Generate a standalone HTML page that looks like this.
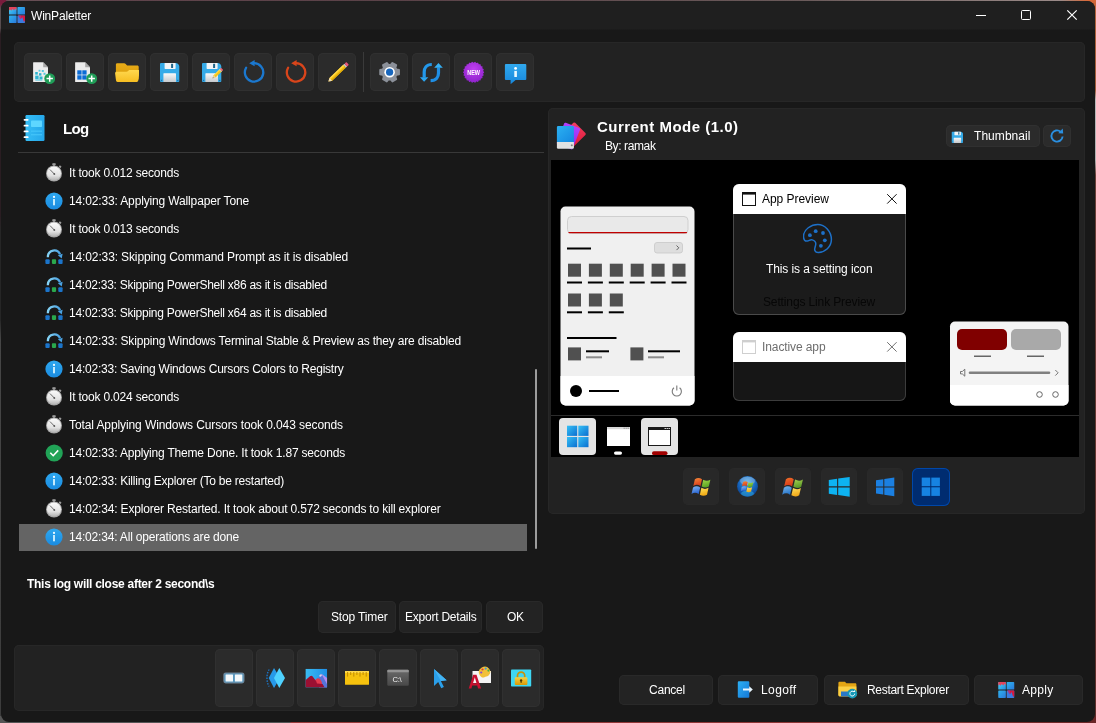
<!DOCTYPE html><html><head><meta charset="utf-8"><title>WinPaletter</title><style>
html,body{margin:0;padding:0}
body{width:1096px;height:723px;position:relative;overflow:hidden;background:#5a5050;font-family:"Liberation Sans", sans-serif;}
.b{position:absolute;display:block}
.t{position:absolute;white-space:pre;line-height:1;font-family:"Liberation Sans", sans-serif;will-change:transform}
#bg{position:absolute;left:0;top:0;width:1096px;height:723px;background:linear-gradient(90deg,#555 0,#555 290px,#9a3b3b 291px,#8a3434 900px,#6a2626 100%)}
#bgt{position:absolute;left:0;top:0;width:1096px;height:12px;background:linear-gradient(90deg,#7a1c3c 0,#6a5258 9px,#60444c 100px,#5a4248 400px,#6a5a5a 800px,#9a8a88 1060px,#d86838 1088px)}
#bgl{position:absolute;left:0;top:0;width:6px;height:716px;background:linear-gradient(180deg,#7a1c3c 0,#7a1c3c 4px,#5a5052 9px,#564c4e 28px,#2a1d22 34px,#2a1d22 215px,#262626 230px,#262626 320px,#464646 340px,#3c3c3c 100%)}
#bgr{position:absolute;left:1090px;top:0;width:6px;height:716px;background:linear-gradient(180deg,#d86838 0,#b0623c 12px,#a05c3a 90px,#b8b8b8 100px,#b0b0b0 160px,#6a4038 175px,#5e2e2a 100%)}
</style></head><body><div id="bg"></div><div id="bgt"></div><div id="bgl"></div><div id="bgr"></div>
<div class="b" id="win" style="left:1px;top:1px;width:1094px;height:721px;background:#181818;border-radius:8px;overflow:hidden">
<div class="b" style="left:0;top:0;width:1094px;height:30px;background:linear-gradient(180deg,#1f1f1f 0,#1f1f1f 27.500px,#181818 29.500px)"></div></div>
<svg class="b" style="left:9px;top:7px" width="16" height="16" viewBox="0 0 16 16">
<defs><linearGradient id="apA" x1="0" y1="0" x2="1" y2="1"><stop offset="0" stop-color="#4ad8f5"/><stop offset="1" stop-color="#2388e2"/></linearGradient>
<linearGradient id="apB" x1="0" y1="0" x2="1" y2="1"><stop offset="0" stop-color="#2fb4ee"/><stop offset="1" stop-color="#2a78dc"/></linearGradient></defs>
<rect x="0" y="0" width="7.600" height="7.600" rx=".7" fill="url(#apA)"/>
<rect x="8.400" y="0" width="7.600" height="7.600" rx=".7" fill="url(#apB)"/>
<rect x="0" y="8.400" width="7.600" height="7.600" rx=".7" fill="url(#apB)"/>
<rect x="8.400" y="8.400" width="7.600" height="7.600" rx=".7" fill="#3a7ce0"/>
<path d="M.7 0h6.200a.7.700 0 0 1 .7.700V3.400L6.300 1.800 5 3.600 3.600 1.900 2.200 3.800 1.200 2.600 0 3.600V.7A.7.700 0 0 1 .7 0z" fill="#e2455c"/>
<path d="M9.400 8.400h5.900a.7.700 0 0 1 .7.700v4.300l-1 1.600-1.800-5-1.400 2.200z" fill="#d81840"/>
<path d="M9 8.400h2.800l.2 3.800-1.300-1z" fill="#a83a90" opacity=".8"/>
</svg>
<span class="t" id="t0" style="left:30.5px;top:9.84px;font-size:12px;font-weight:400;color:#fff;letter-spacing:-0.185px;">WinPaletter</span>
<svg class="b" style="left:970px;top:0" width="126" height="31" viewBox="0 0 126 31"><g stroke="#fff" stroke-width="1" fill="none"><path d="M6 15.500h10"/><rect x="51.500" y="10.500" width="9" height="9" rx="1"/><path d="M97.300 10.300l9.400 9.400M106.700 10.300l-9.400 9.400" stroke-width="1.200"/></g></svg>
<div class="b" style="left:14px;top:42px;width:1070.5px;height:60px;background:#222222;border-radius:5px;box-shadow:inset 0 0 0 1px #272727"></div>
<div class="b" style="left:24px;top:53px;width:38px;height:38px;background:#2b2b2b;border-radius:5px;box-shadow:inset 0 0 0 1px #303030"></div>
<svg class="b" style="left:31px;top:60px" width="24" height="24" viewBox="0 0 24 24"><path d="M2.600 2.300h9.600l4.800 4.900v14.400a.5.500 0 0 1-.5.500H2.600a.5.500 0 0 1-.5-.5V2.800a.5.500 0 0 1 .5-.5z" fill="#ececec"/>
<path d="M12.200 2.300l4.800 4.900h-4.300a.5.500 0 0 1-.5-.5z" fill="#a8a8a8"/>
<g fill="#2db4d0"><rect x="4.200" y="12" width="2.600" height="2.600"/><rect x="4.200" y="15.600" width="3.400" height="3.400"/><rect x="8" y="13.200" width="2.400" height="2.400"/><rect x="8.500" y="16.500" width="3" height="2.800"/><rect x="10.800" y="10" width="2" height="2" fill="#58c8e0"/><rect x="7.600" y="9.800" width="1.800" height="1.800" fill="#58c8e0"/><rect x="12.500" y="12.800" width="2" height="2" fill="#58c8e0"/><rect x="4.300" y="19.400" width="7" height="1.200" fill="#58c8e0"/></g><circle cx="18.700" cy="18.600" r="5.400" fill="#1f9d57"/><path d="M18.700 15.400v6.400M15.500 18.600h6.400" stroke="#fff" stroke-width="1.500"/></svg>
<div class="b" style="left:66px;top:53px;width:38px;height:38px;background:#2b2b2b;border-radius:5px;box-shadow:inset 0 0 0 1px #303030"></div>
<svg class="b" style="left:73px;top:60px" width="24" height="24" viewBox="0 0 24 24"><path d="M2.600 2.300h9.600l4.800 4.900v14.400a.5.500 0 0 1-.5.500H2.600a.5.500 0 0 1-.5-.5V2.800a.5.500 0 0 1 .5-.5z" fill="#ececec"/>
<path d="M12.200 2.300l4.800 4.900h-4.300a.5.500 0 0 1-.5-.5z" fill="#a8a8a8"/>
<g fill="#0a6cd6"><rect x="4.300" y="10.300" width="4.300" height="4.300"/><rect x="9.300" y="10.300" width="4.300" height="4.300"/><rect x="4.300" y="15.300" width="4.300" height="4.300"/><rect x="9.300" y="15.300" width="4.300" height="4.300"/></g><circle cx="18.700" cy="18.600" r="5.400" fill="#1f9d57"/><path d="M18.700 15.400v6.400M15.500 18.600h6.400" stroke="#fff" stroke-width="1.500"/></svg>
<div class="b" style="left:108px;top:53px;width:38px;height:38px;background:#2b2b2b;border-radius:5px;box-shadow:inset 0 0 0 1px #303030"></div>
<svg class="b" style="left:115px;top:60px" width="24" height="24" viewBox="0 0 24 24">
<defs><linearGradient id="foA" x1="0" y1="0" x2="0" y2="1"><stop offset="0" stop-color="#ffd84e"/><stop offset="1" stop-color="#f6be22"/></linearGradient>
<linearGradient id="foB" x1="0" y1="0" x2="0" y2="1"><stop offset="0" stop-color="#e8ac18"/><stop offset="1" stop-color="#d89a08"/></linearGradient></defs>
<path d="M2.200 3.200h7c.5 0 .9.200 1.200.500l1.700 1.900h10.200c.8 0 1.400.600 1.400 1.400v12.500H.9V4.500c0-.7.600-1.300 1.300-1.300z" fill="url(#foB)"/>
<path d="M1.500 11.700h10c.5 0 1-.2 1.300-.5l.8-.7c.3-.3.800-.4 1.300-.4h8.300c.9 0 1.500.8 1.300 1.600l-1.300 9c-.1.700-.7 1.200-1.400 1.200H2.500c-.7 0-1.300-.5-1.400-1.200L.1 13.300c-.1-.8.500-1.600 1.400-1.600z" fill="url(#foA)"/>
</svg>
<div class="b" style="left:150px;top:53px;width:38px;height:38px;background:#2b2b2b;border-radius:5px;box-shadow:inset 0 0 0 1px #303030"></div>
<svg class="b" style="left:157px;top:60px" width="24" height="24" viewBox="0 0 24 24"><defs><linearGradient id="flA" x1="0" y1="0" x2="0" y2="1"><stop offset="0" stop-color="#fafafa"/><stop offset="1" stop-color="#c4c8cc"/></linearGradient></defs>
<path d="M4 2.900h14.600c2 0 3.700 1.700 3.700 3.700v14.500a1 1 0 0 1-1 1H4a1 1 0 0 1-1-1V3.900a1 1 0 0 1 1-1z" fill="#36abe8"/>
<rect x="7.600" y="2.900" width="11" height="6" rx=".6" fill="#f2f4f6"/>
<rect x="14.100" y="3.800" width="2" height="4.200" fill="#1d6488"/>
<rect x="6.400" y="13.200" width="12.600" height="8.900" rx=".6" fill="url(#flA)"/>
<rect x="3.900" y="19.800" width="1.300" height="1.300" fill="#1d6fa8"/><rect x="20.100" y="19.800" width="1.300" height="1.300" fill="#1d6fa8"/></svg>
<div class="b" style="left:192px;top:53px;width:38px;height:38px;background:#2b2b2b;border-radius:5px;box-shadow:inset 0 0 0 1px #303030"></div>
<svg class="b" style="left:199px;top:60px" width="24" height="24" viewBox="0 0 24 24"><defs><linearGradient id="flB" x1="0" y1="0" x2="0" y2="1"><stop offset="0" stop-color="#fafafa"/><stop offset="1" stop-color="#c4c8cc"/></linearGradient></defs>
<path d="M4 2.900h14.600c2 0 3.700 1.700 3.700 3.700v14.500a1 1 0 0 1-1 1H4a1 1 0 0 1-1-1V3.900a1 1 0 0 1 1-1z" fill="#36abe8"/>
<rect x="7.600" y="2.900" width="11" height="6" rx=".6" fill="#f2f4f6"/>
<rect x="14.100" y="3.800" width="2" height="4.200" fill="#1d6488"/>
<rect x="6.400" y="13.200" width="12.600" height="8.900" rx=".6" fill="url(#flB)"/>
<rect x="3.900" y="19.800" width="1.300" height="1.300" fill="#1d6fa8"/><rect x="20.100" y="19.800" width="1.300" height="1.300" fill="#1d6fa8"/>
<g transform="translate(13.600 18.300) rotate(-44.500)"><path d="M0 0l3-1.500h9.300v3H3z" fill="#f5c518"/><path d="M3-1.500h9.300v1H3z" fill="#ffdc50"/><path d="M0 0l3-1.500v3z" fill="#e8d4b0"/><path d="M0 0l1.100-.55v1.100z" fill="#444"/><rect x="10.600" y="-1.500" width="1" height="3" fill="#c8c8c8"/><rect x="11.600" y="-1.500" width="1.800" height="3" rx=".6" fill="#e8607a"/></g></svg>
<div class="b" style="left:234px;top:53px;width:38px;height:38px;background:#2b2b2b;border-radius:5px;box-shadow:inset 0 0 0 1px #303030"></div>
<svg class="b" style="left:241px;top:60px" width="24" height="24" viewBox="0 0 24 24"><path d="M13 3.200a9.200 9.200 0 1 1-7.900 4.600" fill="none" stroke="#1b78cf" stroke-width="2.300" stroke-linecap="round"/><path d="M8.200 3.300l5.400-3.200v6.200z" fill="#1b78cf"/></svg>
<div class="b" style="left:276px;top:53px;width:38px;height:38px;background:#2b2b2b;border-radius:5px;box-shadow:inset 0 0 0 1px #303030"></div>
<svg class="b" style="left:283px;top:60px" width="24" height="24" viewBox="0 0 24 24"><path d="M13 3.200a9.200 9.200 0 1 1-7.900 4.600" fill="none" stroke="#d9451b" stroke-width="2.300" stroke-linecap="round"/><path d="M8.200 3.300l5.400-3.200v6.200z" fill="#d9451b"/></svg>
<div class="b" style="left:318px;top:53px;width:38px;height:38px;background:#2b2b2b;border-radius:5px;box-shadow:inset 0 0 0 1px #303030"></div>
<svg class="b" style="left:325px;top:60px" width="24" height="24" viewBox="0 0 24 24">
<g transform="translate(3.200 21.800) rotate(-43.500)"><path d="M0 0l3.600-1.900h19v3.800h-19z" fill="#f6c414"/><path d="M3.600-1.900h19v1.300h-19z" fill="#ffd84a"/><path d="M3.600.7h19v1.200h-19z" fill="#e0a808"/><path d="M0 0l3.600-1.900v3.800z" fill="#f0dcb8"/><path d="M0 0l1.300-.7v1.400z" fill="#3a3a3a"/><rect x="22.600" y="-1.900" width="1.600" height="3.800" fill="#cfcfcf"/><rect x="24.200" y="-1.900" width="2.600" height="3.800" rx=".8" fill="#e8557a"/></g></svg>
<div class="b" style="left:363px;top:52px;width:1px;height:40px;background:#3a3a3a;border-radius:0px;"></div>
<div class="b" style="left:370px;top:53px;width:38px;height:38px;background:#2b2b2b;border-radius:5px;box-shadow:inset 0 0 0 1px #303030"></div>
<svg class="b" style="left:377px;top:60px" width="24" height="24" viewBox="0 0 24 24"><g transform="rotate(30 12.600 12.200)"><path d="M9.88 5.32L10.38 2.76L14.82 2.76L15.32 5.32L17.20 6.40L19.67 5.56L21.89 9.40L19.92 11.12L19.92 13.28L21.89 15.00L19.67 18.84L17.20 18.00L15.32 19.08L14.82 21.64L10.38 21.64L9.88 19.08L8.00 18.00L5.53 18.84L3.31 15.00L5.28 13.28L5.28 11.12L3.31 9.40L5.53 5.56L8.00 6.40z" fill="#8b9099" stroke="#8b9099" stroke-width="1.800" stroke-linejoin="round"/></g><circle cx="12.600" cy="12.200" r="5.300" fill="#fff"/><circle cx="12.600" cy="12.200" r="3.600" fill="#1766bd"/></svg>
<div class="b" style="left:412px;top:53px;width:38px;height:38px;background:#2b2b2b;border-radius:5px;box-shadow:inset 0 0 0 1px #303030"></div>
<svg class="b" style="left:419px;top:60px" width="24" height="24" viewBox="0 0 24 24">
<path d="M12.800 4.500C7 4.500 5.200 8.500 5.200 12v5.600" fill="none" stroke="#2398ea" stroke-width="3.200"/>
<path d="M.9 17.300h8.400l-4.200 4.400z" fill="#2aa5f0"/>
<path d="M11.600 20.600c5.900 0 7.900-4.100 7.900-7.600V7.400" fill="none" stroke="#1f8ee4" stroke-width="3.200"/>
<path d="M15.200 7.700h8.600l-4.300-4.600z" fill="#35b0f5"/>
</svg>
<div class="b" style="left:454px;top:53px;width:38px;height:38px;background:#2b2b2b;border-radius:5px;box-shadow:inset 0 0 0 1px #303030"></div>
<svg class="b" style="left:461px;top:60px;will-change:transform" width="24" height="24" viewBox="0 0 24 24"><defs><radialGradient id="nwA" cx=".5" cy=".35" r=".7"><stop offset="0" stop-color="#c040f0"/><stop offset="1" stop-color="#8a20c8"/></radialGradient></defs>
<path d="M23.15 12.30L23.01 12.67L22.67 13.02L22.33 13.35L22.15 13.67L22.23 14.04L22.47 14.45L22.69 14.88L22.72 15.27L22.49 15.59L22.06 15.83L21.64 16.04L21.38 16.31L21.35 16.68L21.46 17.14L21.56 17.62L21.48 18.00L21.16 18.24L20.69 18.35L20.22 18.44L19.89 18.62L19.76 18.97L19.74 19.44L19.70 19.93L19.51 20.27L19.14 20.41L18.65 20.39L18.18 20.33L17.82 20.42L17.59 20.71L17.44 21.16L17.26 21.62L16.98 21.90L16.59 21.93L16.13 21.76L15.69 21.58L15.32 21.56L15.02 21.78L14.75 22.17L14.45 22.55L14.10 22.74L13.71 22.66L13.32 22.37L12.95 22.08L12.60 21.95L12.25 22.08L11.88 22.37L11.49 22.66L11.10 22.74L10.75 22.55L10.45 22.17L10.18 21.78L9.88 21.56L9.51 21.58L9.07 21.76L8.61 21.93L8.22 21.90L7.94 21.62L7.76 21.16L7.61 20.71L7.38 20.42L7.02 20.33L6.55 20.39L6.06 20.41L5.69 20.27L5.50 19.93L5.46 19.44L5.44 18.97L5.31 18.62L4.98 18.44L4.51 18.35L4.04 18.24L3.72 18.00L3.64 17.62L3.74 17.14L3.85 16.68L3.82 16.31L3.56 16.04L3.14 15.83L2.71 15.59L2.48 15.27L2.51 14.88L2.73 14.45L2.97 14.04L3.05 13.67L2.87 13.35L2.53 13.02L2.19 12.67L2.05 12.30L2.19 11.93L2.53 11.58L2.87 11.25L3.05 10.93L2.97 10.56L2.73 10.15L2.51 9.72L2.48 9.33L2.71 9.01L3.14 8.77L3.56 8.56L3.82 8.29L3.85 7.92L3.74 7.46L3.64 6.98L3.72 6.60L4.04 6.36L4.51 6.25L4.98 6.16L5.31 5.98L5.44 5.63L5.46 5.16L5.50 4.67L5.69 4.33L6.06 4.19L6.55 4.21L7.02 4.27L7.38 4.18L7.61 3.89L7.76 3.44L7.94 2.98L8.22 2.70L8.61 2.67L9.07 2.84L9.51 3.02L9.88 3.04L10.18 2.82L10.45 2.43L10.75 2.05L11.10 1.86L11.49 1.94L11.88 2.23L12.25 2.52L12.60 2.65L12.95 2.52L13.32 2.23L13.71 1.94L14.10 1.86L14.45 2.05L14.75 2.43L15.02 2.82L15.32 3.04L15.69 3.02L16.13 2.84L16.59 2.67L16.98 2.70L17.26 2.98L17.44 3.44L17.59 3.89L17.82 4.18L18.18 4.27L18.65 4.21L19.14 4.19L19.51 4.33L19.70 4.67L19.74 5.16L19.76 5.63L19.89 5.98L20.22 6.16L20.69 6.25L21.16 6.36L21.48 6.60L21.56 6.98L21.46 7.46L21.35 7.92L21.38 8.29L21.64 8.56L22.06 8.77L22.49 9.01L22.72 9.33L22.69 9.72L22.47 10.15L22.23 10.56L22.15 10.93L22.33 11.25L22.67 11.58L23.01 11.93z" fill="url(#nwA)"/><text x="12.600" y="14.600" font-family="Liberation Sans, sans-serif" font-weight="700" font-size="6.300" fill="#fff" text-anchor="middle" textLength="12.800" lengthAdjust="spacingAndGlyphs">NEW</text></svg>
<div class="b" style="left:496px;top:53px;width:38px;height:38px;background:#2b2b2b;border-radius:5px;box-shadow:inset 0 0 0 1px #303030"></div>
<svg class="b" style="left:503px;top:60px" width="24" height="24" viewBox="0 0 24 24"><defs><linearGradient id="inA" x1="0" y1="0" x2="0" y2="1"><stop offset="0" stop-color="#31a9ee"/><stop offset="1" stop-color="#1787dc"/></linearGradient></defs>
<path d="M2.900 4h19.400a1 1 0 0 1 1 1v14.100a1 1 0 0 1-1 1H12.600L7.600 24.200v-4.100H2.900a1 1 0 0 1-1-1V5a1 1 0 0 1 1-1z" fill="url(#inA)"/>
<circle cx="12.600" cy="8.400" r="1.400" fill="#fff"/><rect x="11.300" y="10.900" width="2.600" height="6.100" fill="#eafaff"/></svg>
<svg class="b" style="left:22px;top:114px" width="24" height="28" viewBox="0 0 24 28"><defs><linearGradient id="nbA" x1="0" y1="0" x2="1" y2="0"><stop offset="0" stop-color="#35bdf5"/><stop offset="1" stop-color="#25a7ea"/></linearGradient></defs>
<rect x="3.500" y="1" width="19" height="26" rx="1.200" fill="url(#nbA)"/>
<rect x="9" y="6.500" width="11" height="6.500" rx=".8" fill="#5ed6ff"/>
<rect x="9" y="16.500" width="11" height="1.400" fill="#45c6fa" opacity=".8"/><rect x="9" y="20" width="11" height="1.400" fill="#45c6fa" opacity=".8"/>
<g fill="#fff"><rect x="1.600" y="5" width="5" height="1.700" rx=".85"/><rect x="1.600" y="10.800" width="5" height="1.700" rx=".85"/><rect x="1.600" y="16.600" width="5" height="1.700" rx=".85"/><rect x="1.600" y="22.300" width="5" height="1.700" rx=".85"/></g></svg>
<span class="t" id="t1" style="left:63.0px;top:121.10px;font-size:15px;font-weight:700;color:#fff;letter-spacing:-0.625px;">Log</span>
<div class="b" style="left:18px;top:152px;width:526px;height:1px;background:#383838;border-radius:0px;"></div>
<div class="b" style="left:18.5px;top:523.5px;width:508px;height:27px;background:#646464;border-radius:0px;"></div>
<svg class="b" style="left:45px;top:162px" width="18" height="20" viewBox="0 0 18 20"><defs><linearGradient id="swA" x1="0" y1="0" x2="0" y2="1"><stop offset="0" stop-color="#fafafa"/><stop offset=".65" stop-color="#e2e2e2"/><stop offset="1" stop-color="#b4b4b4"/></linearGradient></defs>
<rect x="7.300" y="1.300" width="3.400" height="1.700" rx=".5" fill="#a2a2a2"/><rect x="8.200" y="2.600" width="1.600" height="1.600" fill="#8a8a8a"/>
<rect x="14" y="3.700" width="2.300" height="1.800" rx=".5" fill="#9a9a9a" transform="rotate(40 15.100 4.600)"/>
<circle cx="9" cy="11.500" r="8" fill="#a8a8a8"/><circle cx="9" cy="11.400" r="7" fill="url(#swA)"/>
<path d="M9.300 12L5.200 7.800" stroke="#5a5a5a" stroke-width=".9" stroke-linecap="round"/><circle cx="9.300" cy="12" r=".9" fill="#5a5a5a"/></svg>
<span class="t" id="t2" style="left:68.5px;top:166.84px;font-size:12px;font-weight:400;color:#fff;letter-spacing:-0.194px;">It took 0.012 seconds</span>
<svg class="b" style="left:45px;top:190px" width="18" height="20" viewBox="0 0 18 20"><defs><linearGradient id="icA" x1="0" y1="0" x2="0" y2="1"><stop offset="0" stop-color="#2ea8f0"/><stop offset="1" stop-color="#1a8be0"/></linearGradient></defs>
<circle cx="9" cy="11" r="8.600" fill="url(#icA)"/><circle cx="9" cy="6.900" r="1.100" fill="#f4fcff"/><rect x="8.100" y="9" width="1.800" height="6.300" fill="#d6f4ff"/></svg>
<span class="t" id="t3" style="left:68.5px;top:194.84px;font-size:12px;font-weight:400;color:#fff;letter-spacing:-0.146px;">14:02:33: Applying Wallpaper Tone</span>
<svg class="b" style="left:45px;top:218px" width="18" height="20" viewBox="0 0 18 20"><defs><linearGradient id="swA" x1="0" y1="0" x2="0" y2="1"><stop offset="0" stop-color="#fafafa"/><stop offset=".65" stop-color="#e2e2e2"/><stop offset="1" stop-color="#b4b4b4"/></linearGradient></defs>
<rect x="7.300" y="1.300" width="3.400" height="1.700" rx=".5" fill="#a2a2a2"/><rect x="8.200" y="2.600" width="1.600" height="1.600" fill="#8a8a8a"/>
<rect x="14" y="3.700" width="2.300" height="1.800" rx=".5" fill="#9a9a9a" transform="rotate(40 15.100 4.600)"/>
<circle cx="9" cy="11.500" r="8" fill="#a8a8a8"/><circle cx="9" cy="11.400" r="7" fill="url(#swA)"/>
<path d="M9.300 12L5.200 7.800" stroke="#5a5a5a" stroke-width=".9" stroke-linecap="round"/><circle cx="9.300" cy="12" r=".9" fill="#5a5a5a"/></svg>
<span class="t" id="t4" style="left:68.5px;top:222.84px;font-size:12px;font-weight:400;color:#fff;letter-spacing:-0.194px;">It took 0.013 seconds</span>
<svg class="b" style="left:45px;top:246px" width="18" height="20" viewBox="0 0 18 20"><defs><linearGradient id="skA" x1="0" y1="0" x2="1" y2="0"><stop offset="0" stop-color="#86d4f6"/><stop offset="1" stop-color="#4aa2e2"/></linearGradient></defs>
<path d="M2.900 11.200v-.9a6.300 6.300 0 0 1 12.100-2" fill="none" stroke="url(#skA)" stroke-width="2.300"/><path d="M12.900 9.300l4.700-1.600-.9 4.800z" fill="#4aa2e2"/>
<rect x=".4" y="13.300" width="4.300" height="4.600" rx="1" fill="#1b74ca"/><rect x="6.900" y="13.300" width="4.200" height="4.600" rx=".8" fill="#2aa84c"/><rect x="13.300" y="13.300" width="4.300" height="4.600" rx="1" fill="#1b74ca"/></svg>
<span class="t" id="t5" style="left:68.5px;top:250.84px;font-size:12px;font-weight:400;color:#fff;letter-spacing:-0.127px;">14:02:33: Skipping Command Prompt as it is disabled</span>
<svg class="b" style="left:45px;top:274px" width="18" height="20" viewBox="0 0 18 20"><defs><linearGradient id="skA" x1="0" y1="0" x2="1" y2="0"><stop offset="0" stop-color="#86d4f6"/><stop offset="1" stop-color="#4aa2e2"/></linearGradient></defs>
<path d="M2.900 11.200v-.9a6.300 6.300 0 0 1 12.100-2" fill="none" stroke="url(#skA)" stroke-width="2.300"/><path d="M12.900 9.300l4.700-1.600-.9 4.800z" fill="#4aa2e2"/>
<rect x=".4" y="13.300" width="4.300" height="4.600" rx="1" fill="#1b74ca"/><rect x="6.900" y="13.300" width="4.200" height="4.600" rx=".8" fill="#2aa84c"/><rect x="13.300" y="13.300" width="4.300" height="4.600" rx="1" fill="#1b74ca"/></svg>
<span class="t" id="t6" style="left:68.5px;top:278.84px;font-size:12px;font-weight:400;color:#fff;letter-spacing:-0.265px;">14:02:33: Skipping PowerShell x86 as it is disabled</span>
<svg class="b" style="left:45px;top:302px" width="18" height="20" viewBox="0 0 18 20"><defs><linearGradient id="skA" x1="0" y1="0" x2="1" y2="0"><stop offset="0" stop-color="#86d4f6"/><stop offset="1" stop-color="#4aa2e2"/></linearGradient></defs>
<path d="M2.900 11.200v-.9a6.300 6.300 0 0 1 12.100-2" fill="none" stroke="url(#skA)" stroke-width="2.300"/><path d="M12.900 9.300l4.700-1.600-.9 4.800z" fill="#4aa2e2"/>
<rect x=".4" y="13.300" width="4.300" height="4.600" rx="1" fill="#1b74ca"/><rect x="6.900" y="13.300" width="4.200" height="4.600" rx=".8" fill="#2aa84c"/><rect x="13.300" y="13.300" width="4.300" height="4.600" rx="1" fill="#1b74ca"/></svg>
<span class="t" id="t7" style="left:68.5px;top:306.84px;font-size:12px;font-weight:400;color:#fff;letter-spacing:-0.265px;">14:02:33: Skipping PowerShell x64 as it is disabled</span>
<svg class="b" style="left:45px;top:330px" width="18" height="20" viewBox="0 0 18 20"><defs><linearGradient id="skA" x1="0" y1="0" x2="1" y2="0"><stop offset="0" stop-color="#86d4f6"/><stop offset="1" stop-color="#4aa2e2"/></linearGradient></defs>
<path d="M2.900 11.200v-.9a6.300 6.300 0 0 1 12.100-2" fill="none" stroke="url(#skA)" stroke-width="2.300"/><path d="M12.900 9.300l4.700-1.600-.9 4.800z" fill="#4aa2e2"/>
<rect x=".4" y="13.300" width="4.300" height="4.600" rx="1" fill="#1b74ca"/><rect x="6.900" y="13.300" width="4.200" height="4.600" rx=".8" fill="#2aa84c"/><rect x="13.300" y="13.300" width="4.300" height="4.600" rx="1" fill="#1b74ca"/></svg>
<span class="t" id="t8" style="left:68.5px;top:334.84px;font-size:12px;font-weight:400;color:#fff;letter-spacing:-0.183px;">14:02:33: Skipping Windows Terminal Stable &amp; Preview as they are disabled</span>
<svg class="b" style="left:45px;top:358px" width="18" height="20" viewBox="0 0 18 20"><defs><linearGradient id="icA" x1="0" y1="0" x2="0" y2="1"><stop offset="0" stop-color="#2ea8f0"/><stop offset="1" stop-color="#1a8be0"/></linearGradient></defs>
<circle cx="9" cy="11" r="8.600" fill="url(#icA)"/><circle cx="9" cy="6.900" r="1.100" fill="#f4fcff"/><rect x="8.100" y="9" width="1.800" height="6.300" fill="#d6f4ff"/></svg>
<span class="t" id="t9" style="left:68.5px;top:362.84px;font-size:12px;font-weight:400;color:#fff;letter-spacing:-0.228px;">14:02:33: Saving Windows Cursors Colors to Registry</span>
<svg class="b" style="left:45px;top:386px" width="18" height="20" viewBox="0 0 18 20"><defs><linearGradient id="swA" x1="0" y1="0" x2="0" y2="1"><stop offset="0" stop-color="#fafafa"/><stop offset=".65" stop-color="#e2e2e2"/><stop offset="1" stop-color="#b4b4b4"/></linearGradient></defs>
<rect x="7.300" y="1.300" width="3.400" height="1.700" rx=".5" fill="#a2a2a2"/><rect x="8.200" y="2.600" width="1.600" height="1.600" fill="#8a8a8a"/>
<rect x="14" y="3.700" width="2.300" height="1.800" rx=".5" fill="#9a9a9a" transform="rotate(40 15.100 4.600)"/>
<circle cx="9" cy="11.500" r="8" fill="#a8a8a8"/><circle cx="9" cy="11.400" r="7" fill="url(#swA)"/>
<path d="M9.300 12L5.200 7.800" stroke="#5a5a5a" stroke-width=".9" stroke-linecap="round"/><circle cx="9.300" cy="12" r=".9" fill="#5a5a5a"/></svg>
<span class="t" id="t10" style="left:68.5px;top:390.84px;font-size:12px;font-weight:400;color:#fff;letter-spacing:-0.194px;">It took 0.024 seconds</span>
<svg class="b" style="left:45px;top:414px" width="18" height="20" viewBox="0 0 18 20"><defs><linearGradient id="swA" x1="0" y1="0" x2="0" y2="1"><stop offset="0" stop-color="#fafafa"/><stop offset=".65" stop-color="#e2e2e2"/><stop offset="1" stop-color="#b4b4b4"/></linearGradient></defs>
<rect x="7.300" y="1.300" width="3.400" height="1.700" rx=".5" fill="#a2a2a2"/><rect x="8.200" y="2.600" width="1.600" height="1.600" fill="#8a8a8a"/>
<rect x="14" y="3.700" width="2.300" height="1.800" rx=".5" fill="#9a9a9a" transform="rotate(40 15.100 4.600)"/>
<circle cx="9" cy="11.500" r="8" fill="#a8a8a8"/><circle cx="9" cy="11.400" r="7" fill="url(#swA)"/>
<path d="M9.300 12L5.200 7.800" stroke="#5a5a5a" stroke-width=".9" stroke-linecap="round"/><circle cx="9.300" cy="12" r=".9" fill="#5a5a5a"/></svg>
<span class="t" id="t11" style="left:68.5px;top:418.84px;font-size:12px;font-weight:400;color:#fff;letter-spacing:-0.098px;">Total Applying Windows Cursors took 0.043 seconds</span>
<svg class="b" style="left:45px;top:442px" width="18" height="20" viewBox="0 0 18 20"><circle cx="9.200" cy="11" r="8.600" fill="#21a357"/><path d="M5.300 10.800l2.900 2.900 5-5.300" fill="none" stroke="#fff" stroke-width="1.600"/></svg>
<span class="t" id="t12" style="left:68.5px;top:446.84px;font-size:12px;font-weight:400;color:#fff;letter-spacing:-0.183px;">14:02:33: Applying Theme Done. It took 1.87 seconds</span>
<svg class="b" style="left:45px;top:470px" width="18" height="20" viewBox="0 0 18 20"><defs><linearGradient id="icA" x1="0" y1="0" x2="0" y2="1"><stop offset="0" stop-color="#2ea8f0"/><stop offset="1" stop-color="#1a8be0"/></linearGradient></defs>
<circle cx="9" cy="11" r="8.600" fill="url(#icA)"/><circle cx="9" cy="6.900" r="1.100" fill="#f4fcff"/><rect x="8.100" y="9" width="1.800" height="6.300" fill="#d6f4ff"/></svg>
<span class="t" id="t13" style="left:68.5px;top:474.84px;font-size:12px;font-weight:400;color:#fff;letter-spacing:-0.223px;">14:02:33: Killing Explorer (To be restarted)</span>
<svg class="b" style="left:45px;top:498px" width="18" height="20" viewBox="0 0 18 20"><defs><linearGradient id="swA" x1="0" y1="0" x2="0" y2="1"><stop offset="0" stop-color="#fafafa"/><stop offset=".65" stop-color="#e2e2e2"/><stop offset="1" stop-color="#b4b4b4"/></linearGradient></defs>
<rect x="7.300" y="1.300" width="3.400" height="1.700" rx=".5" fill="#a2a2a2"/><rect x="8.200" y="2.600" width="1.600" height="1.600" fill="#8a8a8a"/>
<rect x="14" y="3.700" width="2.300" height="1.800" rx=".5" fill="#9a9a9a" transform="rotate(40 15.100 4.600)"/>
<circle cx="9" cy="11.500" r="8" fill="#a8a8a8"/><circle cx="9" cy="11.400" r="7" fill="url(#swA)"/>
<path d="M9.300 12L5.200 7.800" stroke="#5a5a5a" stroke-width=".9" stroke-linecap="round"/><circle cx="9.300" cy="12" r=".9" fill="#5a5a5a"/></svg>
<span class="t" id="t14" style="left:68.5px;top:502.84px;font-size:12px;font-weight:400;color:#fff;letter-spacing:-0.181px;">14:02:34: Explorer Restarted. It took about 0.572 seconds to kill explorer</span>
<svg class="b" style="left:45px;top:526px" width="18" height="20" viewBox="0 0 18 20"><defs><linearGradient id="icA" x1="0" y1="0" x2="0" y2="1"><stop offset="0" stop-color="#2ea8f0"/><stop offset="1" stop-color="#1a8be0"/></linearGradient></defs>
<circle cx="9" cy="11" r="8.600" fill="url(#icA)"/><circle cx="9" cy="6.900" r="1.100" fill="#f4fcff"/><rect x="8.100" y="9" width="1.800" height="6.300" fill="#d6f4ff"/></svg>
<span class="t" id="t15" style="left:68.5px;top:530.84px;font-size:12px;font-weight:400;color:#fff;letter-spacing:-0.186px;">14:02:34: All operations are done</span>
<div class="b" style="left:535px;top:369px;width:2px;height:180px;background:#9c9c9c;border-radius:1px;"></div>
<span class="t" id="t16" style="left:27.0px;top:577.84px;font-size:12px;font-weight:700;color:#fff;letter-spacing:-0.275px;">This log will close after 2 second\s</span>
<div class="b" style="left:318px;top:601px;width:78px;height:32px;background:#232323;border-radius:5px;box-shadow:inset 0 0 0 1px #292929"></div>
<span class="t" id="t17" style="left:330.5px;top:611.24px;font-size:12px;font-weight:400;color:#fff;letter-spacing:-0.153px;">Stop Timer</span>
<div class="b" style="left:399px;top:601px;width:83px;height:32px;background:#232323;border-radius:5px;box-shadow:inset 0 0 0 1px #292929"></div>
<span class="t" id="t18" style="left:405.0px;top:611.24px;font-size:12px;font-weight:400;color:#fff;letter-spacing:-0.229px;">Export Details</span>
<div class="b" style="left:486px;top:601px;width:57px;height:32px;background:#232323;border-radius:5px;box-shadow:inset 0 0 0 1px #292929"></div>
<span class="t" id="t19" style="left:506.5px;top:611.24px;font-size:12px;font-weight:400;color:#fff;letter-spacing:-0.422px;">OK</span>
<div class="b" style="left:14px;top:645px;width:530px;height:66px;background:#222222;border-radius:5px;box-shadow:inset 0 0 0 1px #272727"></div>
<div class="b" style="left:215px;top:649px;width:38px;height:58px;background:#2b2b2b;border-radius:5px;box-shadow:inset 0 0 0 1px #303030"></div>
<svg class="b" style="left:222px;top:666px" width="24" height="24" viewBox="0 0 24 24"><rect x="1.300" y="6.400" width="21.200" height="11.100" rx="2.400" fill="#6d8294"/><rect x="2.300" y="7.400" width="19.200" height="9.100" rx="1.600" fill="#5a97bd"/>
<rect x="3.600" y="8.600" width="7.400" height="6.800" rx=".5" fill="#f4f8fa"/><rect x="12.900" y="8.600" width="7.400" height="6.800" rx=".5" fill="#f4f8fa"/></svg>
<div class="b" style="left:256px;top:649px;width:38px;height:58px;background:#2b2b2b;border-radius:5px;box-shadow:inset 0 0 0 1px #303030"></div>
<svg class="b" style="left:263px;top:666px" width="24" height="24" viewBox="0 0 24 24"><path d="M6.200 3.500C3.200 8 3.200 16 6.200 20.500" fill="none" stroke="#1a7ad0" stroke-width="1.300" stroke-dasharray="1.500 1.300"/>
<path d="M11 1.900l6 10-6 10-5.300-10z" fill="#2799e8"/><path d="M16.300 1.900l5.700 10-5.700 10-5.300-10z" fill="#4fd2ff"/></svg>
<div class="b" style="left:297px;top:649px;width:38px;height:58px;background:#2b2b2b;border-radius:5px;box-shadow:inset 0 0 0 1px #303030"></div>
<svg class="b" style="left:304px;top:666px" width="24" height="24" viewBox="0 0 24 24"><defs><clipPath id="pcA"><rect x="1.400" y="2.800" width="21.800" height="18.800" rx=".7"/></clipPath>
<linearGradient id="pcB" x1="0" y1="0" x2="1" y2="0"><stop offset="0" stop-color="#3abcf2"/><stop offset="1" stop-color="#1f8ee6"/></linearGradient></defs>
<g clip-path="url(#pcA)"><rect x="1.400" y="2.800" width="21.800" height="18.800" fill="url(#pcB)"/>
<path d="M17.400 7.800L23.200 12v9.600H15z" fill="#b28cf2"/>
<path d="M14.500 11.500l2.900-3.700 5.800 10.700v3.100H19z" fill="#5674da"/>
<ellipse cx="16.600" cy="9.500" rx="1.500" ry="1.100" fill="#dccfe6" transform="rotate(-40 16.600 9.500)"/>
<path d="M9.500 19c.5-4.200 2.700-6.800 4.600-6.800 2 0 3.600 2.400 4.100 6z" fill="#e3394f"/>
<path d="M1.400 14.200l4.600-3.900c.8-.7 1.800-.7 2.500 0l3.700 5 .8 2.300 5.600.4 2 3.600H1.400z" fill="#9b1032"/>
</g></svg>
<div class="b" style="left:338px;top:649px;width:38px;height:58px;background:#2b2b2b;border-radius:5px;box-shadow:inset 0 0 0 1px #303030"></div>
<svg class="b" style="left:345px;top:666px" width="24" height="24" viewBox="0 0 24 24"><rect x="-.5" y="5" width="24.900" height="13.800" rx="1.300" fill="#f6c20e"/><rect x="-.5" y="5" width="24.900" height="2" rx="1" fill="#ffd84a"/>
<g stroke="#c08a00" stroke-width="1"><path d="M2.600 6v4.600M5.700 6v3M8.800 6v4.600M11.900 6v3M15 6v4.600M18.100 6v3M21.200 6v4.600"/></g></svg>
<div class="b" style="left:379px;top:649px;width:38px;height:58px;background:#2b2b2b;border-radius:5px;box-shadow:inset 0 0 0 1px #303030"></div>
<svg class="b" style="left:386px;top:666px;will-change:transform" width="24" height="24" viewBox="0 0 24 24"><defs><linearGradient id="tmA" x1="0" y1="0" x2="0" y2="1"><stop offset="0" stop-color="#6a6a6a"/><stop offset="1" stop-color="#484848"/></linearGradient></defs>
<rect x="1.300" y="3.700" width="21.500" height="16.100" rx="1" fill="url(#tmA)"/><path d="M2.300 3.700h19.500a1 1 0 0 1 1 1v1.500H1.300V4.700a1 1 0 0 1 1-1z" fill="#949494"/>
<text x="6.400" y="15.800" font-family="Liberation Sans, sans-serif" font-size="7.600" font-weight="400" fill="#f4f4f4" letter-spacing="-.2">C:\</text></svg>
<div class="b" style="left:420px;top:649px;width:38px;height:58px;background:#2b2b2b;border-radius:5px;box-shadow:inset 0 0 0 1px #303030"></div>
<svg class="b" style="left:427px;top:666px" width="24" height="24" viewBox="0 0 24 24"><path d="M7 3l12.700 11.300-5.800.6 3 6-2.700 1.300-3-6.100L7 20z" fill="#2b9fe9"/><path d="M7 3l12.700 11.300-5.800.6z" fill="#43b4f4"/></svg>
<div class="b" style="left:461px;top:649px;width:38px;height:58px;background:#2b2b2b;border-radius:5px;box-shadow:inset 0 0 0 1px #303030"></div>
<svg class="b" style="left:468px;top:666px" width="24" height="24" viewBox="0 0 24 24"><rect x="4.500" y="5" width="18.500" height="12" fill="#f4f4f4"/>
<path d="M10.800 6.500a5.700 5.300 0 1 1 8 4.500c-1.500.6-2.600-.5-3.800 0-1.400.6-4.200-.5-4.200-4.500z" fill="#f2c037" transform="rotate(-20 16 6)"/>
<circle cx="14.500" cy="3.500" r="1.100" fill="#e03a3a"/><circle cx="17.700" cy="2.600" r="1.100" fill="#3a9be0"/><circle cx="20.400" cy="4.600" r="1.100" fill="#46b04a"/><circle cx="13.200" cy="6.500" r="1.100" fill="#8a4ad0"/>
<path d="M5.200 8.700h3.300l4.600 13.900h-3l-.9-3H4.300l-.9 3H.7zM5 17.200h3.500L6.800 11.300z" fill="#c9102f"/></svg>
<div class="b" style="left:502px;top:649px;width:38px;height:58px;background:#2b2b2b;border-radius:5px;box-shadow:inset 0 0 0 1px #303030"></div>
<svg class="b" style="left:509px;top:666px" width="24" height="24" viewBox="0 0 24 24"><defs><linearGradient id="lkA" x1="0" y1="0" x2="0" y2="1"><stop offset="0" stop-color="#f8d040"/><stop offset="1" stop-color="#d89a08"/></linearGradient></defs>
<rect x="2" y="3.400" width="20.200" height="17.100" rx=".8" fill="#3fd7f3"/>
<path d="M8.500 11.500V9.700a3.600 3.600 0 0 1 7.200 0v1.800" fill="none" stroke="#c8920a" stroke-width="1.700"/>
<rect x="5.800" y="11.300" width="12.600" height="7.600" rx="1" fill="url(#lkA)"/><circle cx="12.100" cy="14.400" r="1.200" fill="#4a3a08"/><rect x="11.600" y="14.600" width="1" height="2.400" fill="#4a3a08"/></svg>
<div class="b" style="left:548px;top:107.8px;width:536.5px;height:406.2px;background:#222222;border-radius:5px;box-shadow:inset 0 0 0 1px #272727"></div>
<svg class="b" style="left:555px;top:121px" width="32" height="29" viewBox="0 0 32 29"><defs><linearGradient id="cdA" x1="0" y1="0" x2="1" y2="1"><stop offset="0" stop-color="#2bb1f2"/><stop offset="1" stop-color="#1588e0"/></linearGradient>
<linearGradient id="cdB" x1="0" y1="0" x2="0" y2="1"><stop offset="0" stop-color="#b040ff"/><stop offset="1" stop-color="#8a28e8"/></linearGradient>
<linearGradient id="cdC" x1="0" y1="0" x2="1" y2="1"><stop offset="0" stop-color="#f04060"/><stop offset="1" stop-color="#e01838"/></linearGradient></defs>
<rect x="1.900" y="4.900" width="17" height="19.500" rx="1.300" fill="url(#cdC)" transform="rotate(45 15.350 23.900)"/>
<rect x="1.900" y="4.900" width="17" height="22.900" rx="1.300" fill="url(#cdB)" transform="rotate(21 15.350 23.900)"/>
<path d="M3.200 4.900h14.400a1.300 1.300 0 0 1 1.300 1.300v14.700H1.900V6.200a1.300 1.300 0 0 1 1.300-1.300z" fill="url(#cdA)"/>
<path d="M1.900 20.900h17v5.600a1.300 1.300 0 0 1-1.300 1.300H3.200a1.300 1.300 0 0 1-1.300-1.300z" fill="#e2e2e2"/>
<path d="M15.800 24.300h2M16.800 23.300v2" stroke="#555" stroke-width=".6"/></svg>
<span class="t" id="t20" style="left:596.5px;top:119.10px;font-size:15px;font-weight:700;color:#fff;letter-spacing:0.506px;">Current Mode (1.0)</span>
<span class="t" id="t21" style="left:604.5px;top:139.84px;font-size:12px;font-weight:400;color:#fff;letter-spacing:-0.391px;">By: ramak</span>
<div class="b" style="left:946px;top:125px;width:94px;height:22px;background:#2b2b2b;border-radius:5px;box-shadow:inset 0 0 0 1px #303030"></div>
<svg class="b" style="left:950px;top:129.5px" width="14" height="14" viewBox="0 0 24 24"><defs><linearGradient id="flA" x1="0" y1="0" x2="0" y2="1"><stop offset="0" stop-color="#fafafa"/><stop offset="1" stop-color="#c4c8cc"/></linearGradient></defs>
<path d="M4 2.900h14.600c2 0 3.700 1.700 3.700 3.700v14.500a1 1 0 0 1-1 1H4a1 1 0 0 1-1-1V3.900a1 1 0 0 1 1-1z" fill="#36abe8"/>
<rect x="7.600" y="2.900" width="11" height="6" rx=".6" fill="#f2f4f6"/>
<rect x="14.100" y="3.800" width="2" height="4.200" fill="#1d6488"/>
<rect x="6.400" y="13.200" width="12.600" height="8.900" rx=".6" fill="url(#flA)"/>
<rect x="3.900" y="19.800" width="1.300" height="1.300" fill="#1d6fa8"/><rect x="20.100" y="19.800" width="1.300" height="1.300" fill="#1d6fa8"/></svg>
<span class="t" id="t22" style="left:973.8px;top:130.14px;font-size:12px;font-weight:400;color:#fff;letter-spacing:0.052px;">Thumbnail</span>
<div class="b" style="left:1043px;top:125px;width:28px;height:22px;background:#2b2b2b;border-radius:5px;box-shadow:inset 0 0 0 1px #303030"></div>
<svg class="b" style="left:1049px;top:128px" width="16" height="16" viewBox="0 0 16 16"><path d="M13.600 8.500a5.600 5.600 0 1 1-2-4.800" fill="none" stroke="#2a8fe0" stroke-width="1.900"/><path d="M9.300 5.300l4.900.3-.5-5z" fill="#2a8fe0"/></svg>
<div class="b" style="left:551px;top:160px;width:528px;height:297px;background:#000;border-radius:0px;"></div>
<div class="b" style="left:551px;top:415px;width:528px;height:1px;background:#2c2c2c;border-radius:0px;"></div>
<svg class="b" style="left:551px;top:160px" width="528" height="297" viewBox="551 160 528 297"><rect x="560.5" y="206.500" width="134" height="199" rx="5" fill="#f0f0f0"/><path d="M560.500 376h134v24.500a5 5 0 0 1-5 5h-124a5 5 0 0 1-5-5z" fill="#ffffff"/><rect x="567.500" y="216.500" width="120.500" height="17" rx="4" fill="#e9e9e9" stroke="#cfcfcf" stroke-width="1"/><path d="M569 232.600h117.500" stroke="#c00000" stroke-width="1.400" stroke-linecap="round"/><rect x="567" y="247.500" width="24" height="2" fill="#000"/><rect x="654.500" y="242.500" width="28" height="10.500" rx="2.500" fill="#dedede" stroke="#c8c8c8" stroke-width=".8"/><path d="M676.500 245.500l2.300 2.300-2.300 2.300" fill="none" stroke="#555" stroke-width=".9"/><rect x="568.0" y="263.700" width="13" height="13" fill="#505050"/><rect x="567.0" y="281.500" width="15" height="2" fill="#000"/><rect x="588.9" y="263.700" width="13" height="13" fill="#505050"/><rect x="587.9" y="281.500" width="15" height="2" fill="#000"/><rect x="609.8" y="263.700" width="13" height="13" fill="#505050"/><rect x="608.8" y="281.500" width="15" height="2" fill="#000"/><rect x="630.7" y="263.700" width="13" height="13" fill="#505050"/><rect x="629.7" y="281.500" width="15" height="2" fill="#000"/><rect x="651.6" y="263.700" width="13" height="13" fill="#505050"/><rect x="650.6" y="281.500" width="15" height="2" fill="#000"/><rect x="672.5" y="263.700" width="13" height="13" fill="#505050"/><rect x="671.5" y="281.500" width="15" height="2" fill="#000"/><rect x="568.0" y="293.500" width="13" height="13" fill="#505050"/><rect x="567.0" y="311.300" width="15" height="2" fill="#000"/><rect x="588.9" y="293.500" width="13" height="13" fill="#505050"/><rect x="587.9" y="311.300" width="15" height="2" fill="#000"/><rect x="609.8" y="293.500" width="13" height="13" fill="#505050"/><rect x="608.8" y="311.300" width="15" height="2" fill="#000"/><rect x="567" y="337" width="49.500" height="2" fill="#000"/><rect x="568" y="347.400" width="13" height="13" fill="#505050"/><rect x="586" y="350.300" width="23" height="2" fill="#000"/><rect x="586" y="356.300" width="16" height="2" fill="#8c8c8c"/><rect x="630.400" y="347.400" width="13" height="13" fill="#505050"/><rect x="648" y="350.300" width="32" height="2" fill="#000"/><rect x="648" y="356.300" width="16" height="2" fill="#8c8c8c"/><circle cx="576" cy="391" r="6" fill="#000"/><rect x="589" y="390" width="30" height="2" fill="#000"/><path d="M674 387.800a4.600 4.600 0 1 0 5.600 0" fill="none" stroke="#7a7a7a" stroke-width="1.100"/><path d="M676.800 385.500v5" stroke="#7a7a7a" stroke-width="1.100"/><rect x="950" y="321.500" width="118.500" height="84" rx="5" fill="#f4f4f4"/><path d="M950 385h118.500v15.500a5 5 0 0 1-5 5h-108.500a5 5 0 0 1-5-5z" fill="#ffffff"/><rect x="957" y="329" width="50" height="21" rx="5" fill="#800000"/><rect x="1011" y="329" width="50" height="21" rx="5" fill="#a9a9a9"/><rect x="974" y="355.500" width="17" height="1.500" fill="#666"/><rect x="1027" y="355.500" width="17" height="1.500" fill="#666"/><path d="M960.500 371.500h1.800l2.500-2.300v7l-2.500-2.300h-1.800z" fill="none" stroke="#666" stroke-width=".9"/><path d="M970 372.800h79" stroke="#808080" stroke-width="2.600" stroke-linecap="round"/><path d="M1055.300 370l2.800 2.800-2.800 2.800" fill="none" stroke="#666" stroke-width=".9"/><circle cx="1039.500" cy="394.500" r="2.800" fill="none" stroke="#666" stroke-width="1"/><circle cx="1055.500" cy="394.500" r="2.800" fill="none" stroke="#666" stroke-width="1"/><defs><linearGradient id="w11" x1="0" y1="0" x2="1" y2="1"><stop offset="0" stop-color="#36c0f5"/><stop offset="1" stop-color="#0a6ed0"/></linearGradient></defs><rect x="559" y="418" width="37" height="37" rx="4" fill="#e4e4e4"/><g fill="url(#w11)"><rect x="567" y="425.700" width="10.200" height="10.200"/><rect x="578.300" y="425.700" width="10.200" height="10.200"/><rect x="567" y="437" width="10.200" height="10.200"/><rect x="578.300" y="437" width="10.200" height="10.200"/></g><rect x="607" y="427" width="23" height="19" fill="#fff"/><rect x="607" y="427" width="23" height="2.200" fill="#d8d8d8"/><g fill="#8a8a8a"><rect x="623.600" y="427.700" width="1.200" height="1"/><rect x="625.600" y="427.700" width="1.200" height="1"/><rect x="627.600" y="427.700" width="1.200" height="1"/></g><rect x="614" y="451.500" width="8" height="3.200" rx="1.600" fill="#fff"/><rect x="641" y="418" width="37" height="37" rx="4" fill="#e4e4e4"/><rect x="648.500" y="427.500" width="22" height="18" fill="#fff" stroke="#1a1a1a" stroke-width="1"/><rect x="648" y="427" width="23" height="3" fill="#1a1a1a"/><g fill="#fff"><rect x="664.600" y="428" width="1.200" height="1"/><rect x="666.600" y="428" width="1.200" height="1"/><rect x="668.600" y="428" width="1.200" height="1"/></g><rect x="652" y="451.300" width="15.500" height="3.700" rx="1.850" fill="#a00000"/></svg>
<div class="b" style="left:733px;top:184px;width:173px;height:131px;border-radius:6px;background:#1b1b1b;box-shadow:inset 0 0 0 1px #4a4a4a;overflow:hidden"><div class="b" style="left:0;top:0;width:173px;height:30px;background:#fff"></div></div>
<svg class="b" style="left:742px;top:192px" width="14" height="14" viewBox="0 0 14 14"><rect x=".5" y=".5" width="13" height="13" fill="none" stroke="#111" stroke-width="1"/><rect x="0" y="0" width="14" height="2.600" fill="#111"/></svg>
<span class="t" id="t23" style="left:761.5px;top:193.34px;font-size:12px;font-weight:400;color:#000;letter-spacing:-0.034px;">App Preview</span>
<svg class="b" style="left:886px;top:193px" width="12" height="12" viewBox="0 0 12 12"><path d="M1.200 1.200l9.400 9.400M10.600 1.200l-9.400 9.400" stroke="#111" stroke-width="1" fill="none"/></svg>
<svg class="b" style="left:803px;top:223px" width="30" height="31" viewBox="0 0 30 31"><path d="M14.800 1.500C8.500 1.500 .500 6.200 .500 13.300c0 3.700 1.700 5 3.700 4.800 2-.2 3-1.800 5-1.200 2.500.7 3.900 2.300 3.500 4.700-.4 2.500-1.600 4.500-.8 6 .7 1.500 2.100 2.100 3.600 2 6.400-.5 12.900-5.500 12.900-13 0-8.300-6.500-15.100-13.600-15.100z" fill="none" stroke="#1d70c8" stroke-width="1.500"/>
<g fill="#1d70c8"><circle cx="12.700" cy="8.200" r="1.900"/><circle cx="20" cy="10" r="1.900"/><circle cx="6.900" cy="12.200" r="1.900"/><circle cx="21.800" cy="17.300" r="1.900"/><circle cx="17.900" cy="22.800" r="1.900"/></g></svg>
<span class="t" id="t24" style="left:765.5px;top:262.54px;font-size:12px;font-weight:400;color:#fff;letter-spacing:-0.101px;">This is a setting icon</span>
<span class="t" id="t25" style="left:762.5px;top:295.84px;font-size:12px;font-weight:400;color:#070707;letter-spacing:-0.130px;">Settings Link Preview</span>
<div class="b" style="left:733px;top:332px;width:173px;height:68.500px;border-radius:6px;background:#161616;box-shadow:inset 0 0 0 1px #3c3c3c;overflow:hidden"><div class="b" style="left:0;top:0;width:173px;height:30px;background:#fff"></div></div>
<svg class="b" style="left:742px;top:340px" width="14" height="14" viewBox="0 0 14 14"><rect x=".5" y=".5" width="13" height="13" fill="none" stroke="#cfcfcf" stroke-width="1"/><rect x="0" y="0" width="14" height="2.400" fill="#cfcfcf"/></svg>
<span class="t" id="t26" style="left:761.8px;top:341.34px;font-size:12px;font-weight:400;color:#6e6e6e;letter-spacing:-0.102px;">Inactive app</span>
<svg class="b" style="left:886px;top:341px" width="12" height="12" viewBox="0 0 12 12"><path d="M1.200 1.200l9.400 9.400M10.600 1.200l-9.400 9.400" stroke="#707070" stroke-width="1" fill="none"/></svg>
<div class="b" style="left:683px;top:468px;width:36px;height:37px;background:#282828;border-radius:5px;box-shadow:inset 0 0 0 1px #292929"></div>
<svg class="b" style="left:689px;top:474px" width="24" height="24" viewBox="0 0 24 24"><defs><linearGradient id="fx1" x1="0" y1="0" x2=".3" y2="1"><stop offset="0" stop-color="#f58a3a"/><stop offset="1" stop-color="#d8401c"/></linearGradient><linearGradient id="fx2" x1="0" y1="0" x2=".3" y2="1"><stop offset="0" stop-color="#a4d848"/><stop offset="1" stop-color="#58a424"/></linearGradient><linearGradient id="fx3" x1="0" y1="0" x2=".3" y2="1"><stop offset="0" stop-color="#86bcf4"/><stop offset="1" stop-color="#2c66d4"/></linearGradient><linearGradient id="fx4" x1="0" y1="0" x2=".3" y2="1"><stop offset="0" stop-color="#ffe45a"/><stop offset="1" stop-color="#f0a814"/></linearGradient></defs><g transform="translate(2.600 -.8) scale(1.020 1.100)"><path d="M3.200 5.500c2.500-1.600 4.800-1.400 7 0l-1.500 6.200c-2.200-1.400-4.500-1.600-7 0z" fill="url(#fx1)"/>
<path d="M11.400 5.900c2.300 1.300 4.600 1.400 7 0l-1.500 6.200c-2.400 1.400-4.700 1.300-7 0z" fill="url(#fx2)"/>
<path d="M1.400 12.900c2.500-1.600 4.800-1.400 7 0L6.900 19c-2.200-1.400-4.500-1.600-7 0z" fill="url(#fx3)"/>
<path d="M9.600 13.300c2.300 1.300 4.600 1.400 7 0L15.100 19.500c-2.400 1.400-4.700 1.300-7 0z" fill="url(#fx4)"/></g></svg>
<div class="b" style="left:729px;top:468px;width:36px;height:37px;background:#282828;border-radius:5px;box-shadow:inset 0 0 0 1px #292929"></div>
<svg class="b" style="left:735px;top:474px" width="24" height="24" viewBox="0 0 24 24"><defs><radialGradient id="vsA" cx=".5" cy=".3" r=".8"><stop offset="0" stop-color="#4aa8e8"/><stop offset=".55" stop-color="#1460b8"/><stop offset="1" stop-color="#0a3478"/></radialGradient></defs>
<circle cx="12.500" cy="12.500" r="10.400" fill="url(#vsA)"/><ellipse cx="12.500" cy="19.500" rx="6.500" ry="3" fill="#3ac0f0" opacity=".45"/><ellipse cx="12.500" cy="7" rx="7.500" ry="4.200" fill="#fff" opacity=".25"/><defs><linearGradient id="fv1" x1="0" y1="0" x2=".3" y2="1"><stop offset="0" stop-color="#f58a3a"/><stop offset="1" stop-color="#d8401c"/></linearGradient><linearGradient id="fv2" x1="0" y1="0" x2=".3" y2="1"><stop offset="0" stop-color="#a4d848"/><stop offset="1" stop-color="#58a424"/></linearGradient><linearGradient id="fv3" x1="0" y1="0" x2=".3" y2="1"><stop offset="0" stop-color="#86bcf4"/><stop offset="1" stop-color="#2c66d4"/></linearGradient><linearGradient id="fv4" x1="0" y1="0" x2=".3" y2="1"><stop offset="0" stop-color="#ffe45a"/><stop offset="1" stop-color="#f0a814"/></linearGradient></defs><g transform="translate(5.800 4.300) scale(.68)"><path d="M3.200 5.500c2.500-1.600 4.800-1.400 7 0l-1.500 6.200c-2.200-1.400-4.500-1.600-7 0z" fill="url(#fv1)"/>
<path d="M11.400 5.900c2.300 1.300 4.600 1.400 7 0l-1.500 6.200c-2.400 1.400-4.700 1.300-7 0z" fill="url(#fv2)"/>
<path d="M1.400 12.900c2.500-1.600 4.800-1.400 7 0L6.900 19c-2.200-1.400-4.500-1.600-7 0z" fill="url(#fv3)"/>
<path d="M9.600 13.300c2.300 1.300 4.600 1.400 7 0L15.100 19.500c-2.400 1.400-4.700 1.300-7 0z" fill="url(#fv4)"/></g></svg>
<div class="b" style="left:775px;top:468px;width:36px;height:37px;background:#282828;border-radius:5px;box-shadow:inset 0 0 0 1px #292929"></div>
<svg class="b" style="left:781px;top:474px" width="24" height="24" viewBox="0 0 24 24"><defs><linearGradient id="f71" x1="0" y1="0" x2=".3" y2="1"><stop offset="0" stop-color="#f0702a"/><stop offset="1" stop-color="#d83a18"/></linearGradient><linearGradient id="f72" x1="0" y1="0" x2=".3" y2="1"><stop offset="0" stop-color="#a8d050"/><stop offset="1" stop-color="#5a9a28"/></linearGradient><linearGradient id="f73" x1="0" y1="0" x2=".3" y2="1"><stop offset="0" stop-color="#7ab8ec"/><stop offset="1" stop-color="#2a78cc"/></linearGradient><linearGradient id="f74" x1="0" y1="0" x2=".3" y2="1"><stop offset="0" stop-color="#ffe060"/><stop offset="1" stop-color="#f0a818"/></linearGradient></defs><g transform="translate(1.300 -1.200) scale(1.120 1.150)"><path d="M3.200 5.500c2.500-1.600 4.800-1.400 7 0l-1.500 6.200c-2.200-1.400-4.500-1.600-7 0z" fill="url(#f71)"/>
<path d="M11.400 5.900c2.300 1.300 4.600 1.400 7 0l-1.500 6.200c-2.400 1.400-4.700 1.300-7 0z" fill="url(#f72)"/>
<path d="M1.400 12.900c2.500-1.600 4.800-1.400 7 0L6.900 19c-2.200-1.400-4.500-1.600-7 0z" fill="url(#f73)"/>
<path d="M9.600 13.300c2.300 1.300 4.600 1.400 7 0L15.100 19.500c-2.400 1.400-4.700 1.300-7 0z" fill="url(#f74)"/></g></svg>
<div class="b" style="left:821px;top:468px;width:36px;height:37px;background:#282828;border-radius:5px;box-shadow:inset 0 0 0 1px #292929"></div>
<svg class="b" style="left:827px;top:474px" width="24" height="24" viewBox="0 0 24 24"><path transform="translate(0 .7)" d="M1.800 5.300l8.300-1.200v7.500H1.800zM11.200 3.900l11.500-1.700v9.400H11.200zM1.800 12.700h8.300v7.500l-8.300-1.200zM11.200 12.700h11.500v9.400l-11.500-1.700z" fill="#0db3f2"/></svg>
<div class="b" style="left:867px;top:468px;width:36px;height:37px;background:#282828;border-radius:5px;box-shadow:inset 0 0 0 1px #292929"></div>
<svg class="b" style="left:873px;top:474px" width="24" height="24" viewBox="0 0 24 24"><path transform="translate(0 .7)" d="M3 5.600l7.300-1v7.100H3zM11.300 4.400l10-1.500v8.800h-10zM3 12.700h7.300v7.100l-7.300-1zM11.300 12.700h10v8.800l-10-1.500z" fill="#1b80e2"/></svg>
<div class="b" style="left:912px;top:468px;width:38px;height:38px;background:#002c70;border-radius:6px;box-shadow:inset 0 0 0 1px #0047a8"></div>
<svg class="b" style="left:919px;top:475px" width="24" height="24" viewBox="0 0 24 24"><g fill="#1683e2"><rect x="2.700" y="2.600" width="8.600" height="8.600"/><rect x="12.300" y="2.600" width="8.600" height="8.600"/><rect x="2.700" y="12.300" width="8.600" height="8.600"/><rect x="12.300" y="12.300" width="8.600" height="8.600"/></g></svg>
<div class="b" style="left:619px;top:675px;width:94px;height:30px;background:#232323;border-radius:5px;box-shadow:inset 0 0 0 1px #292929"></div>
<span class="t" id="t27" style="left:649.0px;top:684.24px;font-size:12px;font-weight:400;color:#fff;letter-spacing:-0.227px;">Cancel</span>
<div class="b" style="left:718px;top:675px;width:100px;height:30px;background:#232323;border-radius:5px;box-shadow:inset 0 0 0 1px #292929"></div>
<span class="t" id="t28" style="left:760.5px;top:684.24px;font-size:12px;font-weight:400;color:#fff;letter-spacing:0.391px;">Logoff</span>
<svg class="b" style="left:737px;top:681px" width="16" height="17" viewBox="0 0 16 17"><defs><linearGradient id="lgA" x1="0" y1="0" x2="1" y2="1"><stop offset="0" stop-color="#2cb0f4"/><stop offset="1" stop-color="#1478d8"/></linearGradient></defs>
<path d="M1.800.3h9.500a1 1 0 0 1 1 1v14.400a1 1 0 0 1-1 1H1.800a1 1 0 0 1-1-1V1.300a1 1 0 0 1 1-1z" fill="url(#lgA)"/>
<path d="M6 7.600h6.200V5.200l3.600 3.300-3.600 3.300V9.400H6z" fill="#e8f6ff"/></svg>
<div class="b" style="left:824px;top:675px;width:145px;height:30px;background:#232323;border-radius:5px;box-shadow:inset 0 0 0 1px #292929"></div>
<span class="t" id="t29" style="left:867.0px;top:684.24px;font-size:12px;font-weight:400;color:#fff;letter-spacing:-0.300px;">Restart Explorer</span>
<svg class="b" style="left:838px;top:681px" width="20" height="18" viewBox="0 0 20 18"><path d="M1.500.8h5c.4 0 .7.100.9.400l1 1.100h8.800c.7 0 1.200.5 1.200 1.200v10.800H.4V1.900C.4 1.300.9.800 1.500.8z" fill="#e3a514"/>
<path d="M.4 5.500h18v8.800c0 .6-.5 1.100-1.100 1.100H1.500c-.6 0-1.100-.5-1.100-1.100z" fill="#fbd045"/>
<rect x="3" y="10.500" width="8" height="4.900" fill="#2a78c8"/>
<circle cx="14.300" cy="12.600" r="4.900" fill="#1597b5"/><path d="M16.700 12.700a2.400 2.400 0 1 1-.8-1.900" fill="none" stroke="#fff" stroke-width="1"/><path d="M14.900 10.900l2.300.2-.2-2.200z" fill="#fff"/></svg>
<div class="b" style="left:974px;top:675px;width:109px;height:30px;background:#232323;border-radius:5px;box-shadow:inset 0 0 0 1px #292929"></div>
<span class="t" id="t30" style="left:1021.5px;top:684.24px;font-size:12px;font-weight:400;color:#fff;letter-spacing:0.294px;">Apply</span>
<svg class="b" style="left:998px;top:682px" width="16.5" height="16" viewBox="0 0 16 16">
<defs><linearGradient id="apA" x1="0" y1="0" x2="1" y2="1"><stop offset="0" stop-color="#4ad8f5"/><stop offset="1" stop-color="#2388e2"/></linearGradient>
<linearGradient id="apB" x1="0" y1="0" x2="1" y2="1"><stop offset="0" stop-color="#2fb4ee"/><stop offset="1" stop-color="#2a78dc"/></linearGradient></defs>
<rect x="0" y="0" width="7.600" height="7.600" rx=".7" fill="url(#apA)"/>
<rect x="8.400" y="0" width="7.600" height="7.600" rx=".7" fill="url(#apB)"/>
<rect x="0" y="8.400" width="7.600" height="7.600" rx=".7" fill="url(#apB)"/>
<rect x="8.400" y="8.400" width="7.600" height="7.600" rx=".7" fill="#3a7ce0"/>
<path d="M.7 0h6.200a.7.700 0 0 1 .7.700V3.400L6.300 1.800 5 3.600 3.600 1.900 2.200 3.800 1.200 2.600 0 3.600V.7A.7.700 0 0 1 .7 0z" fill="#e2455c"/>
<path d="M9.400 8.400h5.900a.7.700 0 0 1 .7.700v4.300l-1 1.600-1.800-5-1.400 2.200z" fill="#d81840"/>
<path d="M9 8.400h2.800l.2 3.800-1.300-1z" fill="#a83a90" opacity=".8"/>
</svg>
</body></html>
